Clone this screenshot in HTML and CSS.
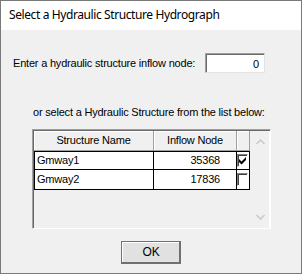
FILE: index.html
```html
<!DOCTYPE html>
<html>
<head>
<meta charset="utf-8">
<link rel="stylesheet" href="styles.css">
</head>
<body>
<div class="window">
  <div class="titlebar">Select a Hydraulic Structure Hydrograph</div>
  <div class="content">
    <div class="node-row">
      <span class="label">Enter a hydraulic structure inflow node:</span>
      <div class="input">0</div>
    </div>
    <div class="hint">or select a Hydraulic Structure from the list below:</div>
    <div class="grid-frame">
      <div class="grid">
        <div class="hdr name">Structure Name</div>
        <div class="hdr node">Inflow Node</div>
        <div class="hdr chk"></div>
        <div class="cell name">Gmway1</div>
        <div class="cell node">35368</div>
        <div class="cell chk"><span class="box checked"><svg width="9" height="9" viewBox="0 0 9 9"><path d="M1 3 L3.5 5.5 L8 1 L8 4 L3.5 8.5 L1 6 Z" fill="#000"/></svg></span></div>
        <div class="cell name">Gmway2</div>
        <div class="cell node">17836</div>
        <div class="cell chk"><span class="box"></span></div>
      </div>
      <div class="scrollbar">
        <svg width="9" height="6" viewBox="0 0 9 6"><path d="M0.5 5 L4.5 1 L8.5 5" stroke="#c8c8c8" stroke-width="1.5" fill="none"/></svg>
        <svg width="9" height="6" viewBox="0 0 9 6"><path d="M0.5 1 L4.5 5 L8.5 1" stroke="#c8c8c8" stroke-width="1.5" fill="none"/></svg>
      </div>
    </div>
    <div class="btn-row"><div class="btn">OK</div></div>
  </div>
</div>
</body>
</html>
```
FILE: styles.css
```css
* { box-sizing: border-box; }
html, body { margin: 0; padding: 0; }
body { width: 302px; height: 274px; overflow: hidden; background: #fff; }
.window {
  width: 302px; height: 274px;
  border: 1px solid #7a7a7a;
  display: flex; flex-direction: column;
}
.titlebar {
  height: 29px; background: #fff;
  font-family: "Noto Sans", sans-serif; font-size: 12px; color: #000;
  letter-spacing: -0.4px;
  padding: 6px 0 0 8px; line-height: 16px;
}
.content {
  flex: 1; background: #f0f0f0;
  font-family: "Liberation Sans", Arial, sans-serif; font-size: 11px; color: #000;
  letter-spacing: -0.2px;
  display: flex; flex-direction: column;
}
.node-row {
  display: flex; align-items: center;
  margin-top: 23px; padding-left: 12px; height: 20px;
}
.label { width: 192px; }
.input {
  width: 60px; height: 20px; background: #fff;
  border-top: 1px solid #a0a0a0; border-left: 1px solid #a0a0a0;
  border-right: 1px solid #e3e3e3; border-bottom: 1px solid #e3e3e3;
  box-shadow: inset 1px 1px 0 #696969;
  text-align: right; padding: 3px 5px 0 0; line-height: 14px;
}
.hint { margin-top: 32px; padding-left: 32px; height: 14px; line-height: 14px; }
.grid-frame {
  margin: 10px 0 0 31px; width: 239px; height: 100px;
  border-top: 1px solid #a0a0a0; border-left: 1px solid #a0a0a0;
  border-right: 1px solid #fff; border-bottom: 1px solid #fff;
  box-shadow: inset 1px 1px 0 #696969;
  display: flex; padding: 1px 0 0 1px;
}
.grid {
  display: grid; grid-template-columns: 120px 83px 13px;
  grid-template-rows: 20px 19px 20px;
  align-self: flex-start;
}
.hdr {
  background: #f0f0f0;
  border-right: 1px solid #a0a0a0; border-bottom: 1px solid #a0a0a0;
  box-shadow: inset 1px 1px 0 #fff;
  text-align: center; line-height: 19px;
}
.cell {
  background: #fff; border-right: 1px solid #000; border-bottom: 1px solid #000;
  line-height: 18px; padding: 0 2px;
}
.cell.name { border-left: 1px solid #000; }
.grid .cell:nth-child(4), .grid .cell:nth-child(5), .grid .cell:nth-child(6) { border-top: 1px solid #000; line-height: 17px; }
.cell.node { text-align: right; padding-right: 16px; }
.cell.chk { padding: 0; display: flex; align-items: center; justify-content: flex-start; background: #fff; }
.box {
  width: 11px; height: 13px; background: #fff;
  border-top: 1px solid #808080; border-left: 1px solid #808080;
  border-right: 1px solid #fff; border-bottom: 1px solid #fff;
  box-shadow: inset 1px 1px 0 #404040;
  display: flex; align-items: center; justify-content: center;
}
.scrollbar {
  margin-left: 2px; width: 19px; height: 97px;
  border-right: 1px solid #fff;
  display: flex; flex-direction: column; justify-content: space-between; align-items: center;
  padding: 8px 0 8px 0;
}
.btn-row { display: flex; padding-left: 120px; margin-top: 12px; }
.btn {
  width: 60px; height: 23px; background: #e1e1e1;
  border: 1px solid #707070;
  box-shadow: inset -1px -1px 0 #707070, inset 1px 1px 0 #fff;
  text-align: center; line-height: 20px; font-size: 12px;
}
```
